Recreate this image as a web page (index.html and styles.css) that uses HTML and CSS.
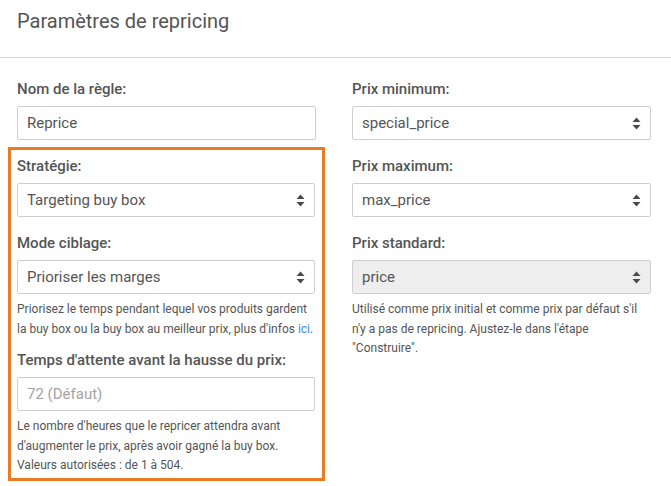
FILE: index.html
```html
<!DOCTYPE html>
<html lang="fr">
<head>
<meta charset="utf-8">
<title>Paramètres de repricing</title>
<link rel="stylesheet" href="styles.css">
</head>
<body>
<header class="panel-head">
  <h1 class="panel-title">Paramètres de repricing</h1>
</header>
<main class="form-grid">
  <div class="col">
    <div class="group">
      <label class="lbl">Nom de la règle:</label>
      <input class="ctl" type="text" value="Reprice">
    </div>
    <div class="highlight">
      <div class="group">
        <label class="lbl">Stratégie:</label>
        <div class="sel-wrap">
          <select class="ctl sel"><option>Targeting buy box</option></select>
          <svg class="caret" width="9" height="13" viewBox="0 0 9 13"><path d="M4.5 0.5 L8.5 5 H0.5 Z M4.5 12.5 L8.5 8 H0.5 Z" fill="#4a4a4a"/></svg>
        </div>
      </div>
      <div class="group has-help">
        <label class="lbl">Mode ciblage:</label>
        <div class="sel-wrap">
          <select class="ctl sel"><option>Prioriser les marges</option></select>
          <svg class="caret" width="9" height="13" viewBox="0 0 9 13"><path d="M4.5 0.5 L8.5 5 H0.5 Z M4.5 12.5 L8.5 8 H0.5 Z" fill="#4a4a4a"/></svg>
        </div>
        <p class="help">Priorisez le temps pendant lequel vos produits gardent la buy box ou la buy box au meilleur prix, plus d'infos <a href="#" class="lnk">ici</a>.</p>
      </div>
      <div class="group last">
        <label class="lbl">Temps d'attente avant la hausse du prix:</label>
        <input class="ctl" type="text" placeholder="72 (Défaut)">
        <p class="help">Le nombre d'heures que le repricer attendra avant d'augmenter le prix, après avoir gagné la buy box. Valeurs autorisées : de 1 à 504.</p>
      </div>
    </div>
  </div>
  <div class="col">
    <div class="group">
      <label class="lbl">Prix minimum:</label>
      <div class="sel-wrap">
        <select class="ctl sel"><option>special_price</option></select>
        <svg class="caret" width="9" height="13" viewBox="0 0 9 13"><path d="M4.5 0.5 L8.5 5 H0.5 Z M4.5 12.5 L8.5 8 H0.5 Z" fill="#4a4a4a"/></svg>
      </div>
    </div>
    <div class="group">
      <label class="lbl">Prix maximum:</label>
      <div class="sel-wrap">
        <select class="ctl sel"><option>max_price</option></select>
        <svg class="caret" width="9" height="13" viewBox="0 0 9 13"><path d="M4.5 0.5 L8.5 5 H0.5 Z M4.5 12.5 L8.5 8 H0.5 Z" fill="#4a4a4a"/></svg>
      </div>
    </div>
    <div class="group">
      <label class="lbl">Prix standard:</label>
      <div class="sel-wrap">
        <select class="ctl sel disabled" disabled><option>price</option></select>
        <svg class="caret" width="9" height="13" viewBox="0 0 9 13"><path d="M4.5 0.5 L8.5 5 H0.5 Z M4.5 12.5 L8.5 8 H0.5 Z" fill="#4a4a4a"/></svg>
      </div>
      <p class="help">Utilisé comme prix initial et comme prix par défaut s'il n'y a pas de repricing. Ajustez-le dans l'étape "Construire".</p>
    </div>
  </div>
</main>
</body>
</html>
```

FILE: styles.css
```css
* { box-sizing: border-box; }
html, body { margin: 0; padding: 0; background: #fff; }
body {
  font-family: Roboto, "Liberation Sans", Arial, sans-serif;
  color: #555;
  width: 671px;
  height: 486px;
  overflow: hidden;
}
.panel-head {
  height: 58px;
  border-bottom: 1px solid #d4d4d4;
  padding: 7px 17px 0;
}
.panel-title {
  margin: 0;
  font-size: 20px;
  font-weight: 400;
  line-height: 28px;
  color: #555;
}
.form-grid {
  display: grid;
  grid-template-columns: 299px 299px;
  column-gap: 36px;
  padding: 21px 0 0 17px;
}
.col { display: flex; flex-direction: column; }
.group { display: flex; flex-direction: column; margin-bottom: 16px; }
.group.has-help { margin-bottom: 11px; }
.group.last { margin-bottom: 0; }
.lbl {
  font-size: 15px;
  font-weight: 500;
  line-height: 20px;
  color: #555;
  margin-bottom: 7px;
}
.ctl {
  width: 100%;
  height: 34px;
  border: 1px solid #cfcfcf;
  border-radius: 2px;
  background: #fff;
  padding: 0 9px;
  font-family: Roboto, "Liberation Sans", Arial, sans-serif;
  font-size: 15px;
  color: #555;
  outline: none;
  margin: 0;
}
.ctl::placeholder { color: #a3a3a3; }
.sel-wrap { position: relative; }
.sel {
  appearance: none;
  -webkit-appearance: none;
  display: block;
  padding-right: 28px;
}
.sel.disabled { background: #eeeeee; color: #555; opacity: 1; }
.caret {
  position: absolute;
  right: 10px;
  top: 11px;
  pointer-events: none;
}
.help {
  margin: 6px 0 0;
  font-size: 12px;
  line-height: 19.5px;
  color: #555;
}
.lnk { color: #3b8ed8; text-decoration: none; }
.highlight {
  margin: -9px 0 0 -9px;
  width: 317px;
  border: 3px solid #e87b24;
  padding: 6px 7px 2px 6px;
}
```
